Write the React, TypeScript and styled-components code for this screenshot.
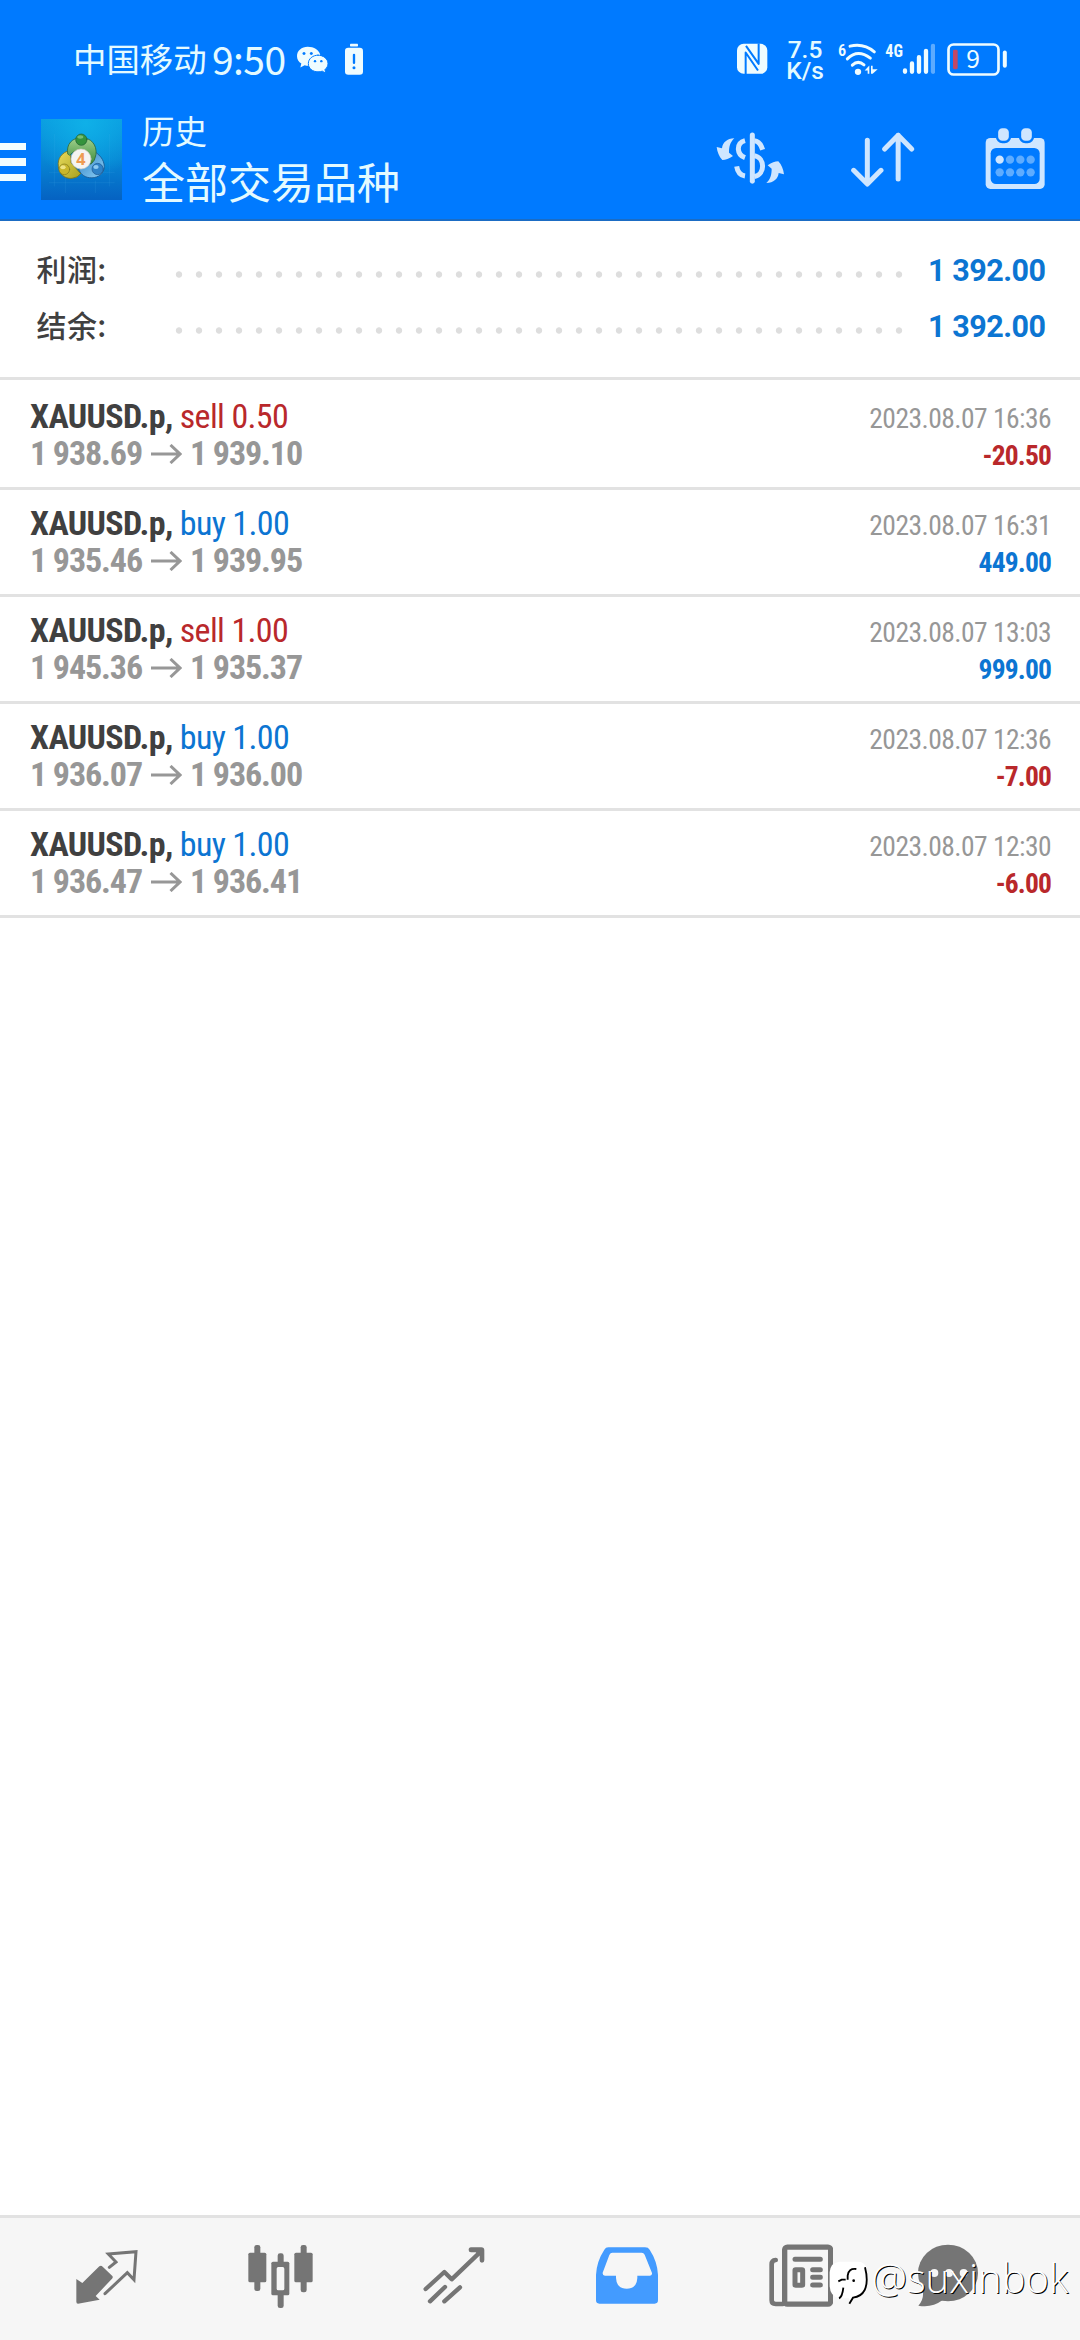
import React from 'react';
import styled, { createGlobalStyle } from 'styled-components';

const GlobalStyle = createGlobalStyle`
  * { box-sizing: border-box; }
  body { margin: 0; background: #fff; }
`;

const ui = `Roboto, 'Noto Sans CJK SC', sans-serif`;
const cjk = `'Noto Sans CJK SC', sans-serif`;
const condensed = `'Roboto Condensed', Roboto, sans-serif`;

const BLUE = '#007aff';
const PALE = '#cfe6ff';
const WHITE = '#effcff';
const GREY = '#757575';
const GAIN = '#0c75d2';
const LOSS = '#b9282b';

const Screen = styled.div`
  position: relative;
  display: flex;
  flex-direction: column;
  width: 1080px;
  height: 2340px;
  overflow: hidden;
  background: #fff;
  font-family: ${ui};
`;
const Header = styled.header`
  height: 221px;
  background: ${BLUE};
  border-bottom: 2px solid #1b6cc4;
  color: #e4faff;
`;
const StatusBar = styled.div`
  display: flex;
  align-items: center;
  justify-content: space-between;
  height: 119px;
  padding: 0 72.3px 0 73px;
`;
const StatusGroup = styled.div`
  display: flex;
  align-items: center;
`;
const Carrier = styled.span`
  margin-top: -3px;
  font: 400 33.4px/40px ${cjk};
`;
const Clock = styled.span`
  width: 73px;
  margin: -4px 0 0 5.5px;
  font: 400 39px/40px ${cjk};
  letter-spacing: -0.6px;
`;
const Speed = styled.span`
  display: flex;
  flex-direction: column;
  align-items: center;
  width: 36px;
  margin: 0 0 0 19px;
  font: 500 24.5px/21px ${ui};
`;
const Glyph = styled.svg<{ $gap?: number }>`
  display: block;
  flex: none;
  margin-left: ${p => p.$gap ?? 0}px;
`;
const Toolbar = styled.div`
  display: flex;
  align-items: flex-start;
  height: 100px;
`;
const MenuButton = styled.button`
  display: flex;
  flex-direction: column;
  gap: 8px;
  width: 41px;
  margin: 24px 0 0;
  padding: 0;
  border: 0;
  background: none;
`;
const MenuBar = styled.i`
  width: 26px;
  height: 7.3px;
  background: #f2fdff;
`;
const Titles = styled.div`
  display: flex;
  flex-direction: column;
  flex: 1;
  margin: -11px 0 0 20px;
`;
const Subtitle = styled.span`
  font: 400 32.5px/44px ${cjk};
`;
const Title = styled.span`
  font: 400 43px/56px ${cjk};
`;
const Actions = styled.div`
  display: flex;
  margin: 6px 35px 0 0;
`;
const Summary = styled.section`
  display: flex;
  flex-direction: column;
  height: 156px;
  padding: 22px 36px 0;
`;
const SummaryRow = styled.div`
  display: flex;
  align-items: center;
  height: 56px;
`;
const SummaryLabel = styled.span`
  width: 134px;
  margin-top: -5px;
  padding-left: 0.5px;
  font: 500 30px/51px ${cjk};
  letter-spacing: 0.4px;
  color: #404040;
`;
const Leader = styled.span`
  width: 740px;
  height: 7px;
  margin: 6px 0 0 -1px;
  background: radial-gradient(circle at 10px 3.5px, #dedede 2.8px, transparent 3.6px) 0 0 / 20px 7px repeat-x;
`;
const SummaryValue = styled.span`
  flex: 1;
  margin: -1px -1.5px 0 0;
  text-align: right;
  white-space: nowrap;
  font: 700 30.5px/56px ${ui};
  letter-spacing: -0.5px;
  color: ${GAIN};
`;
const DealList = styled.ul`
  flex: 1;
  margin: 0;
  padding: 0;
  list-style: none;
  border-top: 3px solid #e2e2e2;
`;
const Deal = styled.li`
  display: flex;
  justify-content: space-between;
  height: 107px;
  padding: 17px 29px 0 30px;
  border-bottom: 3px solid #e2e2e2;
  font-family: ${condensed};
  &:first-child { height: 110px; padding-top: 20px; }
`;
const DealInfo = styled.div`
  display: flex;
  flex-direction: column;
  margin-top: -2px;
`;
const DealResult = styled.div`
  display: flex;
  flex-direction: column;
  align-items: flex-end;
`;
const Line = styled.span`
  display: flex;
  align-items: center;
  height: 37px;
  line-height: 37px;
  white-space: pre;
`;
const Symbol = styled.b`
  font-size: 34px;
  letter-spacing: -0.65px;
  color: #404040;
`;
const Side = styled.span<{ $side: string }>`
  font-size: 34px;
  letter-spacing: -0.65px;
  color: ${p => (p.$side === 'sell' ? LOSS : GAIN)};
`;
const Price = styled.b`
  font-size: 34px;
  letter-spacing: -1.1px;
  color: #979797;
`;
const Arrow = styled.svg`
  margin: 0 8px 0 9px;
`;
const Time = styled.span`
  font-size: 27.5px;
  letter-spacing: -0.53px;
  color: #979797;
`;
const Profit = styled.b<{ $loss: boolean }>`
  font-size: 27.5px;
  letter-spacing: -0.85px;
  color: ${p => (p.$loss ? LOSS : GAIN)};
`;
const Nav = styled.nav`
  display: grid;
  grid-template-columns: repeat(5, 173.4px) 122px;
  justify-items: center;
  height: 125px;
  padding: 25px 0 0 20.5px;
  border-top: 3px solid #e2e2e2;
  background: #f6f6f6;
`;
const Watermark = styled.div`
  position: absolute;
  left: 829px;
  top: 2251px;
  display: flex;
`;
const Handle = styled.span`
  margin-left: 2.5px;
  font: 300 40px/54px 'Open Sans', sans-serif;
  color: #fff;
  text-shadow: 1px 1px 0.5px #000;
`;
const Badge = styled.svg`
  margin-top: 10px;
`;

const deals = [
  { side: 'sell', volume: '0.50', open: '1 938.69', close: '1 939.10', time: '2023.08.07 16:36', profit: '-20.50' },
  { side: 'buy', volume: '1.00', open: '1 935.46', close: '1 939.95', time: '2023.08.07 16:31', profit: '449.00' },
  { side: 'sell', volume: '1.00', open: '1 945.36', close: '1 935.37', time: '2023.08.07 13:03', profit: '999.00' },
  { side: 'buy', volume: '1.00', open: '1 936.07', close: '1 936.00', time: '2023.08.07 12:36', profit: '-7.00' },
  { side: 'buy', volume: '1.00', open: '1 936.47', close: '1 936.41', time: '2023.08.07 12:30', profit: '-6.00' },
];

/* Icons are drawn on a grid of three units to the pixel. */
type IconProps = { x: number; y: number; w: number; h: number; gap?: number; children: React.ReactNode };
const Icon = ({ x, y, w, h, gap, children }: IconProps) => (
  <Glyph $gap={gap} width={w / 3} height={h / 3} viewBox={`${x} ${y} ${w} ${h}`} fill="none" strokeLinecap="round" strokeLinejoin="round">
    {children}
  </Glyph>
);

const WeChat = () => (
  <Icon x={890} y={123.5} w={93} h={110} gap={11.5}>
    <path fill={WHITE} d="M922 141C904 141 890 153 890 169C890 178 895 186 903 191L900 203L913 196Q922 199 930 197L960 166C957 151 941 141 922 141Z" />
    <path fill={WHITE} stroke={BLUE} strokeWidth="3" d="M953 166C937 166 924 177 924 191C924 206 937 216 953 216Q960 216 966 214L976 220L974 209C980 204 983 198 983 191C983 177 969 166 953 166Z" />
    <g fill={BLUE}><circle cx="911" cy="161" r="4.5" /><circle cx="933" cy="161" r="4.5" /><circle cx="944" cy="184" r="3.6" /><circle cx="963" cy="184" r="3.6" /></g>
  </Icon>
);
const BatteryAlert = () => (
  <Icon x={1035} y={123.5} w={54} h={110} gap={17.5}>
    <rect x="1050" y="132" width="24" height="8" rx="2" fill={WHITE} />
    <rect x="1035" y="144" width="54" height="81" rx="10" fill={WHITE} />
    <path stroke={BLUE} strokeWidth="7" d="M1062 165V189" /><circle cx="1062" cy="204" r="4.5" fill={BLUE} />
  </Icon>
);
const Nfc = () => (
  <Icon x={112} y={123.5} w={92} h={110}>
    <rect x="112" y="132" width="91" height="90" rx="20" fill={WHITE} />
    <path stroke={BLUE} strokeWidth="6" strokeLinecap="butt" d="M138 223V158L175 212M139 138L177 192V131" />
  </Icon>
);
const Wifi = () => (
  <Icon x={415} y={123.5} w={120} h={110} gap={15}>
    <text x="415" y="169" fontSize="49" fontWeight="600" fontFamily="Roboto Condensed" fill={WHITE}>6</text>
    <path stroke={WHITE} strokeWidth="9" d="M451 139Q492 129 524 156M443 177Q474 146 512 175M458 196Q475 180 493 195" />
    <circle cx="475" cy="216" r="9.5" fill={WHITE} />
    <path fill={WHITE} d="M495 212L509 197V222H504V212ZM514 198H519V208L534 208L519 222H514Z" />
  </Icon>
);
const Signal = () => (
  <Icon x={555} y={123.5} w={152} h={110} gap={6.7}>
    <text x="556" y="172" fontSize="56" fontWeight="700" fontFamily="Roboto Condensed" textLength="53" lengthAdjust="spacingAndGlyphs" fill={WHITE}>4G</text>
    <path stroke={WHITE} strokeWidth="13" d="M615 212V216M636 191V216M657 172V216M678 153V216" />
    <path stroke="#5cabff" strokeWidth="13" d="M699 138V216" />
  </Icon>
);
const Battery = () => (
  <Icon x={742} y={123.5} w={182} h={110} gap={11.7}>
    <rect x="746.5" y="134" width="150" height="90" rx="15" stroke={WHITE} strokeWidth="8" />
    <path stroke={WHITE} strokeWidth="12" d="M915.5 158V198" />
    <rect x="760" y="150" width="14" height="58" rx="4" fill="#c24866" />
    <text x="820" y="204" fontSize="74" textAnchor="middle" fontFamily="Noto Sans CJK SC" fill={WHITE}>9</text>
  </Icon>
);
const Logo = () => (
  <Icon x={15} y={14} w={243} h={243}>
    <defs>
      <linearGradient id="sky" x1="0" y1="0" x2="0" y2="1"><stop offset="0" stopColor="#0a9bdf" /><stop offset="0.5" stopColor="#0786d4" /><stop offset="1" stopColor="#0562c2" /></linearGradient>
      <radialGradient id="glow" cx="0.55" cy="0.05" r="0.7"><stop offset="0" stopColor="#0fb0e8" /><stop offset="1" stopColor="#0fb0e8" stopOpacity="0" /></radialGradient>
      <linearGradient id="green" x1="0" y1="0" x2="0" y2="1"><stop offset="0" stopColor="#a3d28e" /><stop offset="1" stopColor="#3b8b3a" /></linearGradient>
      <linearGradient id="gold" x1="0" y1="0" x2="1" y2="1"><stop offset="0" stopColor="#e9dc5c" /><stop offset="1" stopColor="#a9a11f" /></linearGradient>
      <linearGradient id="azure" x1="0" y1="0" x2="1" y2="1"><stop offset="0" stopColor="#2f83c6" /><stop offset="1" stopColor="#8fd0f5" /></linearGradient>
    </defs>
    <rect x="15" y="14" width="243" height="243" fill="url(#sky)" />
    <rect x="15" y="14" width="243" height="243" fill="url(#glow)" />
    <path stroke="#4fb4e8" strokeOpacity="0.22" strokeWidth="2" d="M55 60V215M88 190V235M178 200V235M40 174H235M40 205H235M220 60V215" />
    <path fill="url(#azure)" stroke="#1c578f" strokeWidth="2.500" d="M176 112C196 124 208 144 204 164C200 182 180 193 160 190C142 188 132 176 128 164L168 145Z" />
    <path fill="url(#gold)" stroke="#77701e" strokeWidth="2.500" d="M102 108C76 114 64 134 67 156C70 180 86 194 108 192Q126 190 134 178L106 146Z" />
    <path fill="url(#green)" stroke="#2e6a3c" strokeWidth="2.500" d="M95 118C90 88 110 70 136 70C166 70 183 92 180 120Q178 140 164 150C160 110 120 98 102 122Z" />
    <circle cx="136" cy="76" r="17" fill="#35933c" stroke="#1f5e33" strokeWidth="2" /><ellipse cx="133" cy="68" rx="9" ry="5" fill="#93cf8c" opacity="0.7" />
    <circle cx="85" cy="165" r="16" fill="#c9b72c" stroke="#817719" strokeWidth="2" /><ellipse cx="81" cy="159" rx="8" ry="6" fill="#f8ee9b" opacity="0.8" />
    <circle cx="185" cy="164" r="17" fill="#2f82c8" stroke="#1d568f" strokeWidth="2" /><ellipse cx="180" cy="158" rx="8" ry="6" fill="#a6dcfb" opacity="0.8" />
    <circle cx="135" cy="134" r="30" fill="#f5f4f2" stroke="#d3cfc4" strokeWidth="2" />
    <text x="135" y="151" fontSize="49" fontWeight="700" textAnchor="middle" fontFamily="Open Sans" fill="#ee9b52">4</text>
  </Icon>
);
const curl = 'M73 40C51 41 38 52 36 70L20 66C22 82 27 94 37 105C47 105 57 101 69 93L57 83C57 66 60 52 73 40Z';
const Currency = () => (
  <Icon x={18} y={0} w={208} h={200}>
    <g stroke={PALE} strokeWidth="15" strokeLinecap="butt">
      <path strokeLinecap="round" d="M127 30V169" />
      <path d="M105 47Q85 52 85 72Q86 91 105 98M80 124Q84 150 105 153M133 47Q150 48 158 74M133 92C165 98 167 148 133 155" />
    </g>
    <path fill={PALE} d={curl} /><path fill={PALE} d={curl} transform="rotate(180 121 107)" />
  </Icon>
);
const Sort = () => (
  <Icon x={448} y={375} w={196} h={200} gap={64}>
    <path stroke={PALE} strokeWidth="15" d="M500 421V551M459 511L500 552L541 511M592.500 537V406M552 447L592.500 406L633 447" />
  </Icon>
);
const Calendar = () => (
  <Icon x={853} y={375} w={181} h={200} gap={69.7}>
    <rect x="855" y="414" width="177" height="153" rx="14" fill={PALE} />
    <rect x="870" y="444" width="147" height="108" rx="16" fill={BLUE} />
    <g fill={PALE} stroke={BLUE} strokeWidth="7"><rect x="889" y="381" width="39" height="45" rx="16" /><rect x="958" y="381" width="39" height="45" rx="16" /></g>
    {[479, 517].map(y => [897, 928, 959, 990].map(x => <circle key={x + y} cx={x} cy={y} r="12.5" fill={x === 897 && y === 479 ? PALE : '#5eacff'} />))}
  </Icon>
);
const Quotes = () => (
  <Icon x={230} y={130} w={186} h={200}>
    <path fill={GREY} d="M231 238L249 250L300 200Q305 196 310 201L339 229Q342 233 338 237L289 289L301 300L236 312Q231 312 231 306Z" />
    <path stroke={GREY} strokeWidth="9" strokeLinejoin="miter" d="M330 203L350 187L327 163L410 156L404 240L384 219L317 282" />
  </Icon>
);
const Charts = () => (
  <Icon x={743} y={130} w={195} h={200}>
    <g fill={GREY}>
      <rect x="762" y="136" width="18" height="138" rx="7" /><rect x="744" y="159" width="54" height="89" rx="5" />
      <rect x="832" y="161" width="18" height="164" rx="7" /><rect x="813" y="186" width="54" height="101" rx="5" />
      <rect x="901" y="136" width="18" height="142" rx="7" /><rect x="882" y="159" width="55" height="89" rx="5" />
    </g>
    <rect x="829" y="202" width="23" height="70" rx="5" fill="#f6f6f6" />
  </Icon>
);
const Trade = () => (
  <Icon x={187} y={130} w={185} h={200}>
    <path stroke={GREY} strokeWidth="13" d="M195 268L251 217L273 239L360 156" />
    <path fill={GREY} d="M331 143H362Q371 143 371 152V182Q371 189 364 189Q357 189 357 182V168L345 158H331Q324 158 324 151Q324 143 331 143Z" />
    <path stroke={GREY} strokeWidth="13" d="M208 305L253 262M251 305L298 263" />
  </Icon>
);
const History = () => (
  <Icon x={708} y={130} w={186} h={200}>
    <path fill="#439bff" fillRule="evenodd" d="M745 143H855Q865 143 869 150Q892 185 894 225V302Q894 312 884 312H718Q708 312 708 302V225Q710 185 733 150Q737 143 745 143ZM757 159Q751 159 748 166L728 219Q727 228 735 228H768V235Q770 267 800 267Q830 267 832 235V228H870Q877 228 876 220L854 165Q851 159 845 159Z" />
  </Icon>
);
const News = () => (
  <Icon x={148} y={130} w={193} h={200}>
    <g stroke={GREY} strokeWidth="15">
      <rect x="195" y="142.5" width="138" height="171" rx="8" strokeWidth="16" />
      <path d="M168 181Q156 182 156 194V302Q156 313 168 313H190" strokeWidth="14" />
      <path d="M226 179H302M279 210H302M279 233H302M279 256H302" />
      <rect x="226" y="210" width="23" height="47" rx="2" />
    </g>
  </Icon>
);
const Chat = () => (
  <Icon x={595} y={130} w={181} h={200}>
    <ellipse cx="685" cy="220" rx="90" ry="85" fill={GREY} />
    <path fill={GREY} d="M606 258Q618 295 596 318Q636 326 668 302Z" />
    <g fill="#f6f6f6"><circle cx="644" cy="220" r="12" /><circle cx="688" cy="220" r="12" /><circle cx="732" cy="220" r="12" /></g>
  </Icon>
);

export default function App() {
  return (
    <Screen>
      <GlobalStyle />
      <Header>
        <StatusBar>
          <StatusGroup>
            <Carrier>中国移动</Carrier><Clock>9:50</Clock><WeChat /><BatteryAlert />
          </StatusGroup>
          <StatusGroup>
            <Nfc /><Speed><span>7.5</span><span>K/s</span></Speed><Wifi /><Signal /><Battery />
          </StatusGroup>
        </StatusBar>
        <Toolbar>
          <MenuButton><MenuBar /><MenuBar /><MenuBar /></MenuButton>
          <Logo />
          <Titles><Subtitle>历史</Subtitle><Title>全部交易品种</Title></Titles>
          <Actions><Currency /><Sort /><Calendar /></Actions>
        </Toolbar>
      </Header>
      <Summary>
        {['利润', '结余'].map(label => (
          <SummaryRow key={label}>
            <SummaryLabel>{label}:</SummaryLabel><Leader /><SummaryValue>1 392.00</SummaryValue>
          </SummaryRow>
        ))}
      </Summary>
      <DealList>
        {deals.map(d => (
          <Deal key={d.time}>
            <DealInfo>
              <Line><Symbol>XAUUSD.p, </Symbol><Side $side={d.side}>{d.side} {d.volume}</Side></Line>
              <Line>
                <Price>{d.open}</Price>
                <Arrow width="31" height="20" viewBox="0 0 31 20" fill="none" stroke="#979797" strokeWidth="3"><path d="M0 10H29M19.500 1L29 10L19.500 19" /></Arrow>
                <Price>{d.close}</Price>
              </Line>
            </DealInfo>
            <DealResult>
              <Line><Time>{d.time}</Time></Line>
              <Line><Profit $loss={d.profit[0] === '-'}>{d.profit}</Profit></Line>
            </DealResult>
          </Deal>
        ))}
      </DealList>
      <Nav><Quotes /><Charts /><Trade /><History /><News /><Chat /></Nav>
      <Watermark>
        <Badge width="40" height="44" viewBox="28 78 120 132" fill="none">
          <path fill="#fff" d="M60 80H115Q142 80 142 115V150Q142 180 115 186Q100 190 88 206Q92 195 88 190H60Q30 185 30 150V112Q32 82 60 80Z" />
          <path stroke="#000" strokeWidth="5.500" d="M136 97Q147 140 135 165Q125 185 100 188L89 206M110 102Q86 99 84 122V134M56 139L66 134H78M58 190Q68 186 71 158" />
          <circle cx="102" cy="137" r="4" fill="#000" />
        </Badge>
        <Handle>@suxinbok</Handle>
      </Watermark>
    </Screen>
  );
}
